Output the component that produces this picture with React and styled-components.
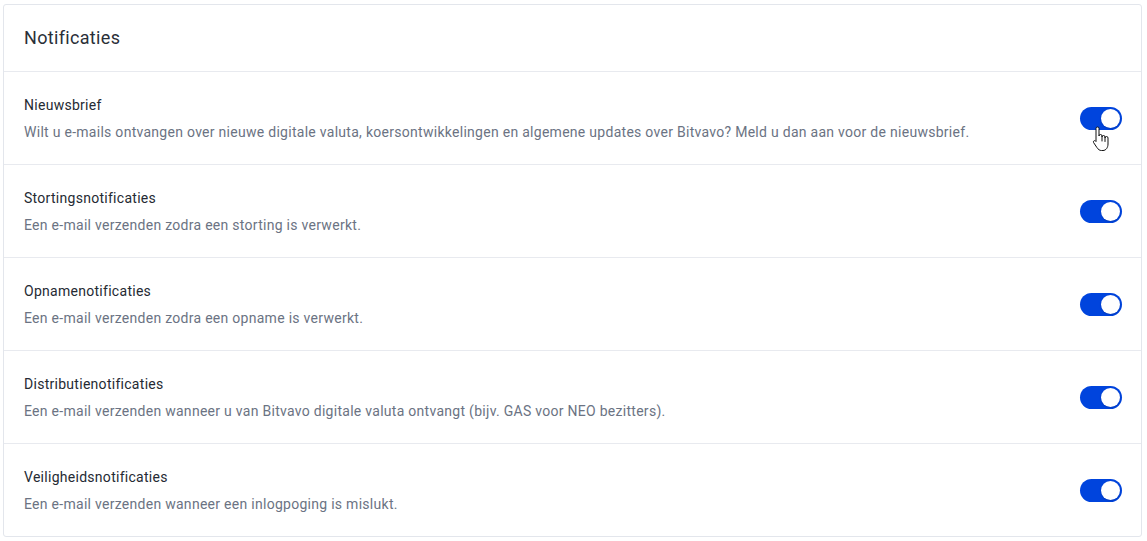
import React, { useState } from "react";
import styled, { createGlobalStyle } from "styled-components";

const GlobalStyle = createGlobalStyle`
  body {
    margin: 0;
    background: #fff;
    font-family: Roboto, "Liberation Sans", sans-serif;
  }
`;

const Page = styled.div`
  padding: 4px 5px 4px 3px;
`;

const Card = styled.section`
  border: 1px solid #e3e6ec;
  border-radius: 3px;
  background: #fff;
`;

const Header = styled.h2`
  margin: 0;
  padding: 20px;
  height: 26px;
  font-size: 18px;
  line-height: 26px;
  font-weight: 400;
  letter-spacing: 0.33px;
  color: #2a2f38;
  border-bottom: 1px solid #e8eaef;
`;

const Row = styled.div`
  display: flex;
  align-items: center;
  justify-content: space-between;
  padding: 23px 19px 22px 20px;
  border-bottom: ${p => (p.last ? "none" : "1px solid #e8eaef")};
`;

const Text = styled.div`
  display: flex;
  flex-direction: column;
  gap: 7px;
  letter-spacing: 0.28px;
`;

const Title = styled.div`
  font-size: 14px;
  line-height: 20px;
  color: #252a33;
`;

const Desc = styled.div`
  font-size: 14px;
  line-height: 20px;
  color: #6b7383;
`;

const SwitchWrap = styled.div`
  position: relative;
  flex: none;
  display: flex;
`;

const Switch = styled.button`
  position: relative;
  width: 42px;
  height: 23px;
  padding: 0;
  border: none;
  border-radius: 12px;
  background: ${p => (p.on ? "#0044dd" : "#c5cad3")};
  cursor: pointer;

  &::after {
    content: "";
    position: absolute;
    top: 2px;
    left: ${p => (p.on ? "21px" : "2px")};
    width: 19px;
    height: 19px;
    border-radius: 50%;
    background: #fff;
    box-shadow: 0 1px 2px rgba(0, 0, 0, 0.15);
  }
`;

const Pointer = styled.svg`
  position: absolute;
  left: 12px;
  top: 19px;
  pointer-events: none;
`;

// mouse cursor that is visible in the screenshot
const HandCursor = () => (
  <Pointer width="20" height="27" viewBox="0 0 20 27">
    <path
      d="M5.5 1a1.5 1.5 0 0 1 1.5 1.5V10a1.5 1.5 0 0 1 3 0v1a1.5 1.5 0 0 1 3 0v1a1.5 1.5 0 0 1 3 0v6c0 3.5-2 6.5-5 6.5H9.5c-2 0-3.2-1-4.6-3L1.6 16.6c-.8-1.1.6-2.6 1.8-1.7L4 15.5V2.5A1.5 1.5 0 0 1 5.5 1z"
      fill="#fff"
      stroke="#111"
      strokeWidth="1"
      strokeLinejoin="round"
    />
    <path d="M10 11v4M13 12v3.5" stroke="#111" strokeWidth="1" strokeLinecap="round" />
  </Pointer>
);

const items = [
  {
    title: "Nieuwsbrief",
    desc: "Wilt u e-mails ontvangen over nieuwe digitale valuta, koersontwikkelingen en algemene updates over Bitvavo? Meld u dan aan voor de nieuwsbrief.",
  },
  {
    title: "Stortingsnotificaties",
    desc: "Een e-mail verzenden zodra een storting is verwerkt.",
  },
  {
    title: "Opnamenotificaties",
    desc: "Een e-mail verzenden zodra een opname is verwerkt.",
  },
  {
    title: "Distributienotificaties",
    desc: "Een e-mail verzenden wanneer u van Bitvavo digitale valuta ontvangt (bijv. GAS voor NEO bezitters).",
  },
  {
    title: "Veiligheidsnotificaties",
    desc: "Een e-mail verzenden wanneer een inlogpoging is mislukt.",
  },
];

export default function App() {
  const [state, setState] = useState(items.map(() => true));

  const toggle = i => setState(s => s.map((v, j) => (j === i ? !v : v)));

  return (
    <Page>
      <GlobalStyle />
      <Card>
        <Header>Notificaties</Header>
        {items.map((item, i) => (
          <Row key={item.title} last={i === items.length - 1}>
            <Text>
              <Title>{item.title}</Title>
              <Desc>{item.desc}</Desc>
            </Text>
            <SwitchWrap>
              <Switch on={state[i]} onClick={() => toggle(i)} aria-label={item.title} />
              {i === 0 && <HandCursor />}
            </SwitchWrap>
          </Row>
        ))}
      </Card>
    </Page>
  );
}
